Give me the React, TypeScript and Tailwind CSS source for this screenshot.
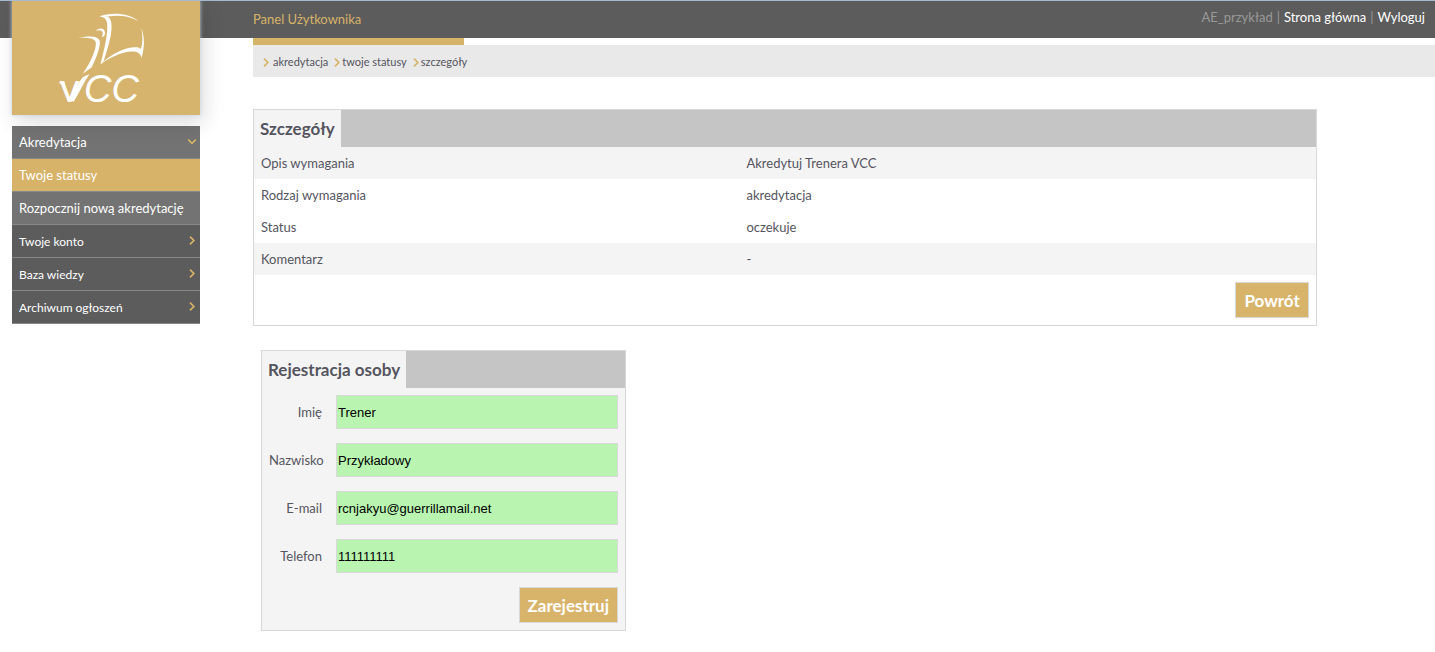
import React from 'react';

interface MenuItem {
  label: string;
  state: 'open' | 'active' | 'sub' | 'closed';
}

interface PanelProps {
  title: string;
  className: string;
  children: React.ReactNode;
}

const menuItems: MenuItem[] = [
  { label: 'Akredytacja', state: 'open' },
  { label: 'Twoje statusy', state: 'active' },
  { label: 'Rozpocznij nową akredytację', state: 'sub' },
  { label: 'Twoje konto', state: 'closed' },
  { label: 'Baza wiedzy', state: 'closed' },
  { label: 'Archiwum ogłoszeń', state: 'closed' },
];

const menuColors = {
  open: 'bg-[#737373] text-[13px]',
  active: 'bg-[#d7b369] text-[13px]',
  sub: 'bg-[#737373] text-[13px]',
  closed: 'bg-[#5c5c5c] text-xs',
};

const details = [
  { label: 'Opis wymagania', value: 'Akredytuj Trenera VCC', shaded: true },
  { label: 'Rodzaj wymagania', value: 'akredytacja', shaded: false },
  { label: 'Status', value: 'oczekuje', shaded: false },
  { label: 'Komentarz', value: '-', shaded: true },
];

const fields = [
  { id: 'first-name', label: 'Imię', type: 'text', value: 'Trener' },
  { id: 'last-name', label: 'Nazwisko', type: 'text', value: 'Przykładowy' },
  { id: 'email', label: 'E-mail', type: 'email', value: 'rcnjakyu@guerrillamail.net' },
  { id: 'phone', label: 'Telefon', type: 'tel', value: '111111111' },
];

const Chevron = ({ className = '' }: { className?: string }) => (
  <svg className={`h-[9px] w-[6px] shrink-0 ${className}`} viewBox="0 0 6 9" fill="none" stroke="#d7b369" strokeWidth="1.7">
    <path d="M1 0.7 L4.8 4.5 L1 8.3" />
  </svg>
);

const Logo = () => (
  <a
    href="#"
    aria-label="VCC"
    className="relative ml-3 block h-[115px] w-[188px] shrink-0 border-t border-[#a6bad1] bg-[#d6b46e] shadow-[0_0_4px_#c3d3e3,4px_8px_20px_rgba(0,0,0,0.14)]"
  >
    <svg className="h-[114px] w-[188px]" viewBox="12 1 188 114" fill="#fff">
      {/* Flag: top edge, pole, right edge, bottom edge */}
      <path d="M99.5 16.2 C110 12.5 128 12 138.500 21 C129 15.500 117 14.500 107 16.800 Z" />
      <path d="M99.5 16.2 C104 15.500 108 16 110 18.500 C114 27 110 42 103.500 61.500 L100.500 64.500 C104 50 110 28 106 20 C105 17.500 102 16.800 99.500 16.200 Z" />
      <path d="M141.3 28 C145 37 144.500 48 141.600 58 L140.800 50 C142.800 43 143 36 141.300 28 Z" />
      <path d="M100.5 64.5 C110 54 126 46.500 137 47.200 C140 47.500 141.500 49 142.200 51 L141.600 58 C140.500 53 137 51.200 131 51.500 C120 52.500 109 58 100.500 64.500 Z" />
      {/* Head and body */}
      <path d="M96 31 C98 27.500 105 27 105 33 C105 35.500 103.500 36.800 101.500 37.200 C105 32 101 28.500 96 31 Z" />
      <path d="M78 38 C87 35.500 98.500 35.500 99.800 41 C100.500 47 96 59 91.500 67.500 L83 73.500 C91 62 97.500 47 95.500 41.500 C93.500 37.500 85 37.200 78 38 Z" />
      {/* Wordmark, with the long arm of the V */}
      <text x="60" y="102" fontSize="28" fontWeight="bold" fontFamily="Lato, sans-serif">V</text>
      <path d="M58.500 83 C60 82 63 81.500 65 82 L64 87 C62 84 61 83.500 58.500 83 Z" />
      <path d="M71 100 C74 94 77 84 83 77 L89.500 74 C84 82 79 93 73.500 102 Z" />
      <text x="84" y="102" fontSize="38" fontStyle="italic" fontFamily="Liberation Sans, sans-serif">CC</text>
    </svg>
  </a>
);

const Panel: React.FC<PanelProps> = ({ title, className, children }) => (
  <section className={`border border-[#d8d8d8] ${className}`}>
    <div className="flex h-[37px] bg-[#c5c5c5]">
      <h2 className="bg-[#f4f4f4] px-[6px] text-[17px] font-bold leading-[37px] text-[#555560]">{title}</h2>
    </div>
    {children}
  </section>
);

const Button = ({ label }: { label: string }) => (
  <button type="button" className="h-9 border border-[#d8d8d8] bg-[#d8b36a] px-2 pt-0.5 text-[17px] font-bold text-white">
    {label}
  </button>
);

export default function App() {
  return (
    <div className="min-h-screen bg-white font-[Lato,sans-serif] text-[13px] text-[#555560]">
      <header className="flex h-[38px] border-t border-[#a6bad1] bg-[#5c5c5c]">
        <div className="-mt-px w-[253px] shrink-0">
          <Logo />
        </div>
        <div className="flex flex-1 justify-between pr-[10px]">
          <a href="#" className="leading-9 text-[#d7b369]">Panel Użytkownika</a>
          <nav className="flex gap-1 leading-8 text-[#999]">
            <span>AE_przykład</span>
            <span>|</span>
            <a href="#" className="text-white">Strona główna</a>
            <span>|</span>
            <a href="#" className="text-white">Wyloguj</a>
          </nav>
        </div>
      </header>

      <div className="flex">
        <aside className="w-[253px] shrink-0 pl-3 pr-[53px] pt-[88px]">
          <nav>
            {menuItems.map((item) => (
              <a
                key={item.label}
                href="#"
                className={`flex h-[33px] items-center justify-between border-b border-[#888] px-[7px] pt-0.5 text-white ${menuColors[item.state]}`}
              >
                <span className="whitespace-nowrap">{item.label}</span>
                {item.state === 'open' && <Chevron className="-mr-0.5 mb-1 rotate-90" />}
                {item.state === 'closed' && <Chevron className="-mr-0.5 mb-1" />}
              </a>
            ))}
          </nav>
        </aside>

        <main className="min-w-0 flex-1">
          <div className="h-[7px] w-[211px] bg-[#d7b369]" />
          <nav className="flex h-8 items-center gap-[6px] bg-[#e9e9e9] pl-[10px] pt-0.5 text-[11px]">
            <a href="#" className="flex items-center gap-1"><Chevron />akredytacja</a>
            <a href="#" className="flex items-center gap-[2px]"><Chevron />twoje statusy</a>
            <a href="#" className="flex items-center gap-[2px]"><Chevron />szczegóły</a>
          </nav>

          <Panel title="Szczegóły" className="mt-8 w-[90%]">
            <table className="w-full table-fixed text-left">
              <tbody>
                {details.map((row) => (
                  <tr key={row.label} className={row.shaded ? 'h-8 bg-[#f4f4f4]' : 'h-8'}>
                    <th scope="row" className="w-[46%] px-[7px] pt-0.5 font-normal">{row.label}</th>
                    <td className="px-1 pt-0.5">{row.value}</td>
                  </tr>
                ))}
              </tbody>
            </table>
            <div className="flex justify-end p-[7px]">
              <Button label="Powrót" />
            </div>
          </Panel>

          <Panel title="Rejestracja osoby" className="ml-2 mt-6 w-fit bg-[#f4f4f4]">
            <form className="flex flex-col gap-[14px] p-[7px]">
              {fields.map((field) => (
                <div key={field.id} className="flex items-center gap-[14px]">
                  <label htmlFor={field.id} className="w-[53px] pt-0.5 text-right">{field.label}</label>
                  <input
                    id={field.id}
                    type={field.type}
                    defaultValue={field.value}
                    className="h-[34px] w-[282px] border border-[#d8d8d8] bg-[#b9f5b1] px-px font-['Liberation_Sans',sans-serif] text-[13px] text-black"
                  />
                </div>
              ))}
              <div className="flex justify-end">
                <Button label="Zarejestruj" />
              </div>
            </form>
          </Panel>
        </main>
      </div>
    </div>
  );
}
